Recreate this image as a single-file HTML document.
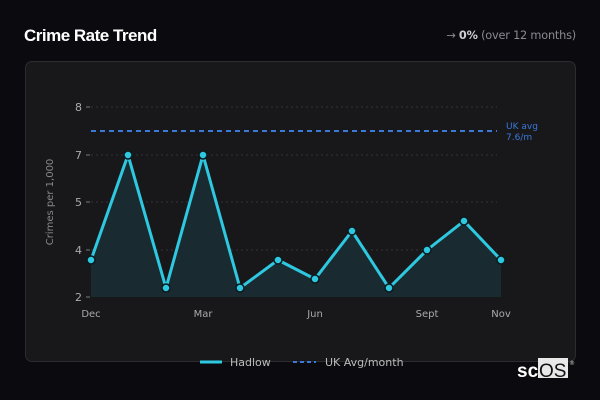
<!DOCTYPE html><html><head><style>
body{margin:0;width:600px;height:400px;background:#0b0b0f;font-family:"DejaVu Sans","Liberation Sans",sans-serif;overflow:hidden;position:relative}
.t{position:absolute;left:24px;top:26px;color:#fff;font-weight:bold;font-size:17px;font-family:"Liberation Sans",sans-serif;letter-spacing:-0.5px}
.r{position:absolute;right:24px;top:29px;color:#8a8a90;font-size:11.3px;letter-spacing:-0.2px}
.r b{color:#cfcfd4}
.card{position:absolute;left:25px;top:61px;width:549px;height:299px;background:#18181b;border:1px solid #2c2c30;border-radius:7px}
svg{position:absolute;left:0;top:0}
</style></head><body>
<div class="t">Crime Rate Trend</div>
<div class="r">→ <b>0%</b> (over 12 months)</div>
<div class="card"></div>
<svg width="600" height="400" font-family="DejaVu Sans, sans-serif">
<g stroke="#333338" stroke-dasharray="2,3" stroke-width="1">
<line x1="91" y1="107" x2="497" y2="107"/><line x1="91" y1="155" x2="497" y2="155"/><line x1="91" y1="202" x2="497" y2="202"/><line x1="91" y1="250" x2="497" y2="250"/></g>
<g stroke="#777" stroke-width="1"><line x1="86" y1="107" x2="90" y2="107"/><line x1="86" y1="155" x2="90" y2="155"/><line x1="86" y1="202" x2="90" y2="202"/><line x1="86" y1="250" x2="90" y2="250"/><line x1="86" y1="297" x2="90" y2="297"/></g>
<g fill="#aaa" font-size="11" text-anchor="end"><text x="82" y="111">8</text><text x="82" y="159">7</text><text x="82" y="206">5</text><text x="82" y="254">4</text><text x="82" y="301">2</text></g>
<text transform="translate(53,202) rotate(-90)" fill="#888" font-size="10" text-anchor="middle">Crimes per 1,000</text>
<line x1="91" y1="131" x2="497" y2="131" stroke="#3b78d8" stroke-width="2" stroke-dasharray="5,4"/>
<text x="506" y="129" fill="#3b78d8" font-size="9">UK avg</text><text x="506" y="140" fill="#3b78d8" font-size="9">7.6/m</text>
<polygon fill="#1a2d33" opacity="0.9" points="91,297 91,260 128,155 166,288 203,155 240,288 278,260 315,279 352,231 389,288 427,250 464,221 501,260 501,297"/>
<polyline fill="none" stroke="#2ec8e0" stroke-width="3" stroke-linejoin="round" points="91,260 128,155 166,288 203,155 240,288 278,260 315,279 352,231 389,288 427,250 464,221 501,260"/>
<g fill="#2ec8e0" stroke="#0b1a1e" stroke-width="1.5"><circle cx="91" cy="260" r="4"/><circle cx="128" cy="155" r="4"/><circle cx="166" cy="288" r="4"/><circle cx="203" cy="155" r="4"/><circle cx="240" cy="288" r="4"/><circle cx="278" cy="260" r="4"/><circle cx="315" cy="279" r="4"/><circle cx="352" cy="231" r="4"/><circle cx="389" cy="288" r="4"/><circle cx="427" cy="250" r="4"/><circle cx="464" cy="221" r="4"/><circle cx="501" cy="260" r="4"/></g>
<g fill="#aaa" font-size="10" text-anchor="middle"><text x="91" y="317">Dec</text><text x="203" y="317">Mar</text><text x="315" y="317">Jun</text><text x="427" y="317">Sept</text><text x="501" y="317">Nov</text></g>
<line x1="200" y1="362" x2="222" y2="362" stroke="#2ec8e0" stroke-width="3"/>
<text x="230" y="366" fill="#bbb" font-size="11">Hadlow</text>
<line x1="293" y1="362" x2="316" y2="362" stroke="#3b78d8" stroke-width="2" stroke-dasharray="4,3"/>
<text x="325" y="366" fill="#bbb" font-size="11">UK Avg/month</text>
<rect x="538" y="358" width="30" height="20" fill="#e8e8e8"/>
<text x="517" y="377" fill="#fff" font-size="19" font-weight="bold" font-family="Liberation Sans, sans-serif">sc</text>
<text x="539" y="377" fill="#111" font-size="19" font-family="Liberation Sans, sans-serif">OS</text>
<text x="569" y="365" fill="#ccc" font-size="6">®</text>
</svg>
</body></html>
